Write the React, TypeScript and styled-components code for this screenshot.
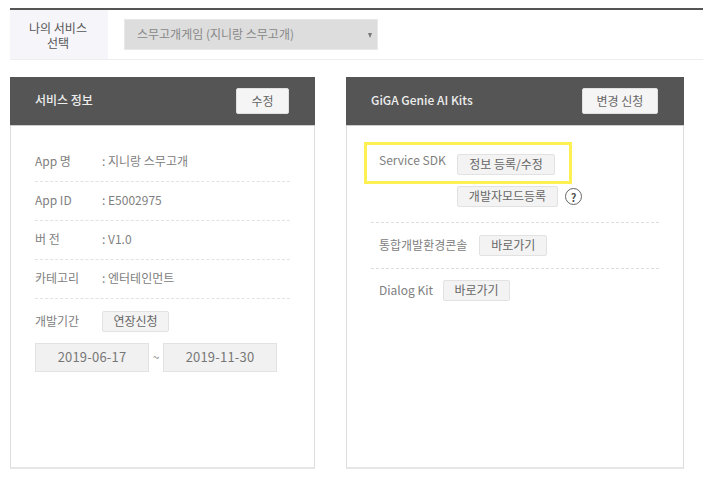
import * as React from "react"
import styled, { createGlobalStyle } from "styled-components"

const GlobalStyle = createGlobalStyle`
  * {
    box-sizing: border-box;
  }
  html,
  body {
    margin: 0;
    background: #fff;
    font-family: "Noto Sans CJK KR", "Noto Sans", sans-serif;
    font-size: 12px;
    color: #666;
  }
`

const Page = styled.div`
  width: 703px;
  height: 484px;
  padding: 8px 0 0 10px;
  overflow: hidden;
`

const ServiceBar = styled.div`
  display: flex;
  align-items: center;
  height: 52px;
  border-top: 2px solid #555;
  border-bottom: 1px solid #eee;
`

const ServiceLabel = styled.div`
  width: 98px;
  height: 49px;
  padding-right: 2px;
  display: flex;
  align-items: center;
  justify-content: center;
  text-align: center;
  background: #f5f5fa;
  color: #555;
  font-size: 12px;
  line-height: 15px;
`

const ServiceSelect = styled.div`
  position: relative;
  width: 254px;
  height: 31px;
  margin-left: 16px;
  padding: 0 0 2px 12px;
  display: flex;
  align-items: center;
  background: #ddd;
  border: 1px solid #e8e8e8;
  color: #888;
  font-size: 12px;

  &::after {
    content: "";
    position: absolute;
    right: 5px;
    top: 13px;
    border-left: 2.5px solid transparent;
    border-right: 2.5px solid transparent;
    border-top: 5px solid #777;
  }
`

const Panels = styled.div`
  display: flex;
  gap: 31px;
  margin-top: 17px;
`

const Panel = styled.section<{ $width: number }>`
  width: ${p => p.$width}px;
  height: 392px;
  border: 1px solid #ddd;
  border-bottom-width: 2px;
  border-bottom-color: #e6e6e6;
`

const PanelHeader = styled.header`
  display: flex;
  align-items: center;
  justify-content: space-between;
  height: 49px;
  margin: -1px -1px 0;
  padding: 0 26px 0 25px;
  background: #555;
  border-bottom: 1px solid #ccc;
`

const PanelTitle = styled.h2`
  margin: 0 0 3px;
  color: #eee;
  font-size: 12px;
  font-weight: 500;
`

const HeaderButton = styled.button<{ $width: number }>`
  width: ${p => p.$width}px;
  height: 26px;
  padding: 0 0 2px;
  background: #f5f5f5;
  border: 1px solid #e0e0e0;
  border-radius: 2px;
  color: #666;
  font: inherit;
  font-size: 12px;
`

const InfoBody = styled.div`
  padding: 17px 24px 0;
`

const InfoRow = styled.div`
  display: flex;
  align-items: center;
  height: 39px;
  padding-bottom: 4px;
  border-bottom: 1px dashed #e2e2e2;
  color: #808080;
`

const InfoLabel = styled.span`
  width: 67px;
`

const PeriodLabel = styled(InfoLabel)`
  padding-bottom: 2px;
`

const PeriodRow = styled.div`
  display: flex;
  align-items: center;
  margin-top: 12px;
  color: #808080;
`

const SmallButton = styled.button<{ $width: number }>`
  width: ${p => p.$width}px;
  height: 21px;
  padding: 0 0 2px;
  background: #f3f3f3;
  border: 1px solid #e2e2e2;
  border-radius: 2px;
  color: #666;
  font: inherit;
  font-size: 12px;
  line-height: 16px;
`

const DateRow = styled.div`
  display: flex;
  align-items: center;
  margin-top: 11px;
  color: #888;
`

const DateBox = styled.div`
  width: 114px;
  height: 29px;
  padding-bottom: 2px;
  display: flex;
  align-items: center;
  justify-content: center;
  background: #f1f1f1;
  border: 1px solid #e2e2e2;
  color: #777;
  font-size: 13px;
  letter-spacing: 0.2px;
`

const Tilde = styled.span`
  width: 14px;
  padding-bottom: 2px;
  text-align: center;
`

const KitBody = styled.div`
  position: relative;
  padding: 0 24px;
`

const Highlight = styled.div`
  position: absolute;
  left: 17px;
  top: 16px;
  width: 208px;
  height: 42px;
  border: 3px solid #fdf053;
  pointer-events: none;
`

const KitRow = styled.div<{ $gap: number }>`
  display: flex;
  align-items: center;
  gap: ${p => p.$gap}px;
  padding-left: 8px;
  color: #808080;
`

const KitName = styled.span`
  padding-bottom: 2px;
`

const SdkBlock = styled.div`
  display: grid;
  grid-template-columns: 78px auto;
  row-gap: 11px;
  padding: 28px 0 15px 8px;
  border-bottom: 1px dashed #ddd;
  color: #808080;
`

const SdkLabel = styled.span`
  margin-top: -1px;
  line-height: 14px;
`

const SdkActions = styled.div`
  display: flex;
  align-items: center;
  gap: 7px;
`

const HelpMark = styled.span`
  width: 17px;
  height: 17px;
  display: flex;
  align-items: center;
  justify-content: center;
  border: 1px solid #666;
  border-radius: 50%;
  color: #555;
  font-size: 11px;
  font-weight: 700;
`

const LinkRow = styled.div<{ $last?: boolean }>`
  display: flex;
  align-items: center;
  height: ${p => (p.$last ? "43px" : "46px")};
  border-bottom: ${p => (p.$last ? "none" : "1px dashed #ddd")};
`

const infoRows = [
  { label: "App 명", value: ": 지니랑 스무고개" },
  { label: "App ID", value: ": E5002975" },
  { label: "버 전", value: ": V1.0" },
  { label: "카테고리", value: ": 엔터테인먼트" },
]

export default function App() {
  return (
    <Page>
      <GlobalStyle />
      <ServiceBar>
        <ServiceLabel>
          나의 서비스
          <br />
          선택
        </ServiceLabel>
        <ServiceSelect>스무고개게임 (지니랑 스무고개)</ServiceSelect>
      </ServiceBar>
      <Panels>
        <Panel $width={305}>
          <PanelHeader>
            <PanelTitle>서비스 정보</PanelTitle>
            <HeaderButton $width={53}>수정</HeaderButton>
          </PanelHeader>
          <InfoBody>
            {infoRows.map(row => (
              <InfoRow key={row.label}>
                <InfoLabel>{row.label}</InfoLabel>
                <span>{row.value}</span>
              </InfoRow>
            ))}
            <PeriodRow>
              <PeriodLabel>개발기간</PeriodLabel>
              <SmallButton $width={67}>연장신청</SmallButton>
            </PeriodRow>
            <DateRow>
              <DateBox>2019-06-17</DateBox>
              <Tilde>~</Tilde>
              <DateBox>2019-11-30</DateBox>
            </DateRow>
          </InfoBody>
        </Panel>
        <Panel $width={338}>
          <PanelHeader>
            <PanelTitle>GiGA Genie AI Kits</PanelTitle>
            <HeaderButton $width={76}>변경 신청</HeaderButton>
          </PanelHeader>
          <KitBody>
            <Highlight />
            <SdkBlock>
              <SdkLabel>Service SDK</SdkLabel>
              <SdkActions>
                <SmallButton $width={98}>정보 등록/수정</SmallButton>
              </SdkActions>
              <span />
              <SdkActions>
                <SmallButton $width={101}>개발자모드등록</SmallButton>
                <HelpMark>?</HelpMark>
              </SdkActions>
            </SdkBlock>
            <LinkRow>
              <KitRow $gap={12}>
                <KitName>통합개발환경콘솔</KitName>
                <SmallButton $width={68}>바로가기</SmallButton>
              </KitRow>
            </LinkRow>
            <LinkRow $last>
              <KitRow $gap={10}>
                <KitName>Dialog Kit</KitName>
                <SmallButton $width={67}>바로가기</SmallButton>
              </KitRow>
            </LinkRow>
          </KitBody>
        </Panel>
      </Panels>
    </Page>
  )
}
